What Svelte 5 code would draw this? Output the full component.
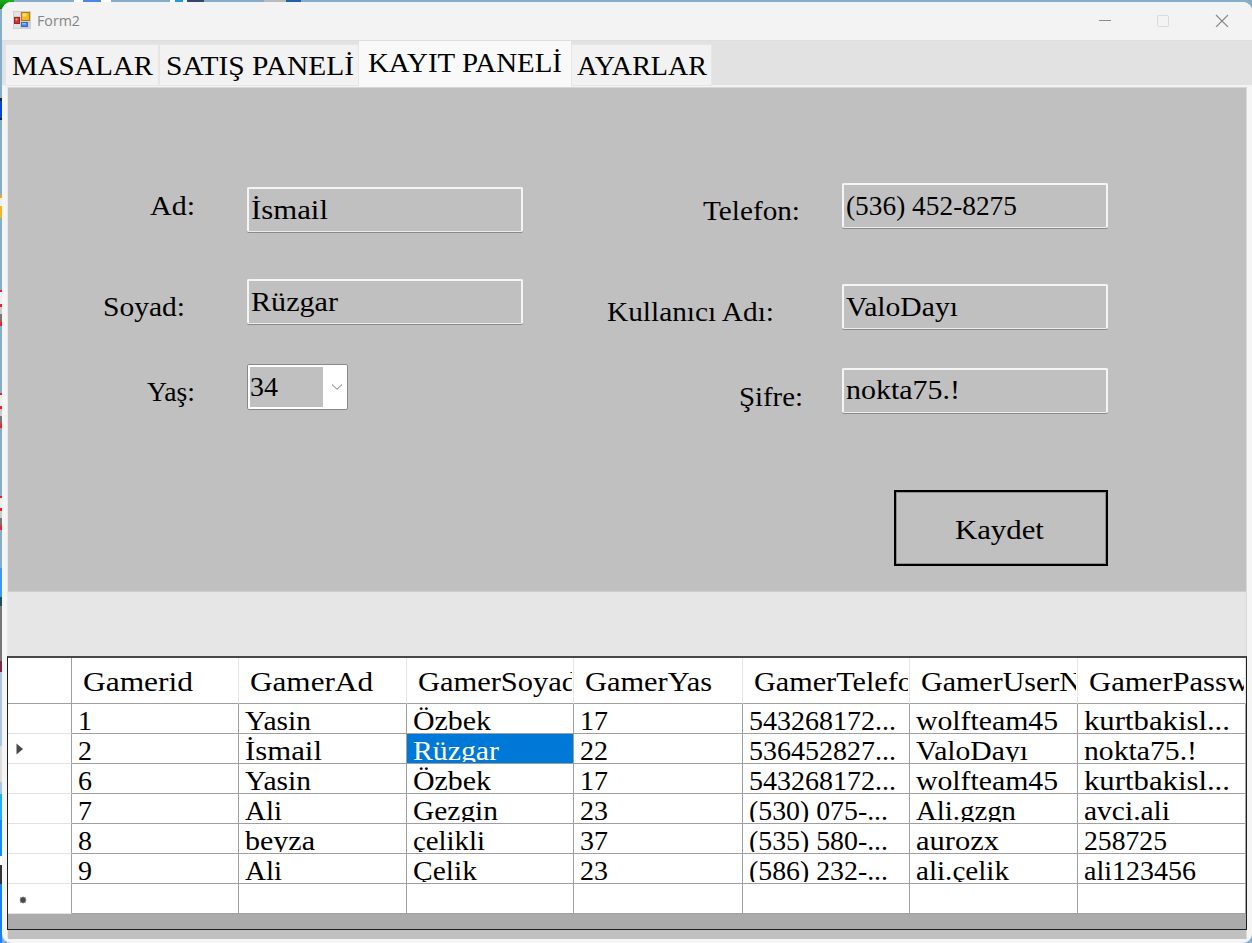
<script>
  // Widens the glyphs of a text so that it fills the given width.
  function fit(node, width) {
    if (!width) return;
    const natural = node.getBoundingClientRect().width;
    node.style.transform = `scaleX(${((width + 1) / natural).toFixed(4)})`;
  }

  const tabs = [
    { text: 'MASALAR', w: 140, cls: 't1' },
    { text: 'SATIŞ PANELİ', w: 187, cls: 't2' },
    { text: 'KAYIT PANELİ', w: 193, cls: 't3 active' },
    { text: 'AYARLAR', w: 129, cls: 't4' }
  ];

  const columns = [
    ['Gamerid', 109],
    ['GamerAd', 122],
    ['GamerSoyad', 158],
    ['GamerYas', 126],
    ['GamerTelefon', 173],
    ['GamerUserName', 209],
    ['GamerPassword', 200]
  ];

  const rows = [
    [['1'], ['Yasin', 65], ['Özbek', 77], ['17', 27], ['543268172...', 146], ['wolfteam45', 141], ['kurtbakisl...', 145]],
    [['2'], ['İsmail', 76], ['Rüzgar', 85], ['22', 27], ['536452827...', 146], ['ValoDayı', 111], ['nokta75.!', 112]],
    [['6'], ['Yasin', 65], ['Özbek', 77], ['17', 27], ['543268172...', 146], ['wolfteam45', 141], ['kurtbakisl...', 145]],
    [['7'], ['Ali', 36], ['Gezgin', 84], ['23', 27], ['(530) 075-...', 138], ['Ali.gzgn', 99], ['avci.ali', 85]],
    [['8'], ['beyza', 69], ['çelikli', 71], ['37', 27], ['(535) 580-...', 138], ['aurozx', 82], ['258725', 82]],
    [['9'], ['Ali', 36], ['Çelik', 63], ['23', 27], ['(586) 232-...', 138], ['ali.çelik', 92], ['ali123456', 111]],
    [[''], [''], [''], [''], [''], [''], ['']]
  ];
</script>

<div class="desktop">
  <div class="window">
    <header class="titlebar">
      <svg class="app-icon" width="18" height="18" viewBox="0 0 18 18">
        <rect width="18" height="18" fill="#cfcfd1" />
        <rect x="1" y="1" width="6" height="4" fill="#e3e3e5" />
        <rect x="1" y="13" width="6" height="4" fill="#e3e3e5" />
        <rect x="8.5" y="1.500" width="8" height="8" fill="#f0b920" stroke="#b07d12" />
        <rect x="9.500" y="2.500" width="4" height="3" fill="#fbdc70" />
        <rect x="1.500" y="6.500" width="5" height="6" fill="#c93528" stroke="#a3251c" />
        <rect x="2.500" y="7.500" width="2" height="2" fill="#ee9a8d" />
        <rect x="8.500" y="11.500" width="6" height="4" fill="#4585e8" stroke="#3a6ac0" />
        <rect x="9" y="12" width="4" height="1.500" fill="#8db9f7" />
      </svg>
      <span class="title"><span use:fit={42}>Form2</span></span>
      <svg class="controls" width="132" height="14" viewBox="0 0 132 14" fill="none">
        <path d="M1 7.500H13" stroke="#8c8c8c" />
        <rect x="59.500" y="2.500" width="11" height="11" rx="1" stroke="#dadada" />
        <path d="M118 2L130 14M130 2L118 14" stroke="#888" stroke-width="1.100" />
      </svg>
    </header>

    <nav class="tabs">
      {#each tabs as tab}
        <div class="tab {tab.cls}"><span use:fit={tab.w}>{tab.text}</span></div>
      {/each}
    </nav>

    <main class="page">
      <section class="form">
        <div class="col left">
          <div class="row r1"><label for="ad"><span use:fit={44}>Ad:</span></label><div class="box" id="ad"><span use:fit={76}>İsmail</span></div></div>
          <div class="row r2"><label for="soyad"><span use:fit={81}>Soyad:</span></label><div class="box" id="soyad"><span use:fit={86}>Rüzgar</span></div></div>
          <div class="row r3">
            <label for="yas"><span use:fit={47}>Yaş:</span></label>
            <div class="combo" id="yas">
              <div class="value"><span use:fit={27}>34</span></div>
              <svg width="12" height="8" viewBox="0 0 12 8"><path d="M1 1.500L6 6.300L11 1.500" fill="none" stroke="#777" /></svg>
            </div>
          </div>
        </div>
        <div class="col right">
          <div class="row r4"><label for="tel"><span use:fit={96}>Telefon:</span></label><div class="box" id="tel"><span use:fit={170}>(536) 452-8275</span></div></div>
          <div class="row r5"><label for="user"><span use:fit={166}>Kullanıcı Adı:</span></label><div class="box" id="user"><span use:fit={111}>ValoDayı</span></div></div>
          <div class="row r6"><label for="pass"><span use:fit={63}>Şifre:</span></label><div class="box" id="pass"><span use:fit={113}>nokta75.!</span></div></div>
          <button><span use:fit={88}>Kaydet</span></button>
        </div>
      </section>

      <div class="band"></div>

      <section class="grid">
        <div class="line head">
          <div class="rowhead"></div>
          {#each columns as [text, w]}
            <div class="cell"><div class="clip"><span use:fit={w}>{text}</span></div></div>
          {/each}
        </div>
        {#each rows as row, i}
          <div class="line">
            <div class="rowhead">
              {#if i === 1}
                <svg width="8" height="12" viewBox="0 0 8 12"><path d="M.5 .5L7 6L.5 11.500Z" fill="#484848" /></svg>
              {:else if i === 6}
                <svg class="star" width="8" height="8" viewBox="0 0 8 8"><path d="M4 .8V7.200M.8 4H7.200M1.500 1.500L6.500 6.500M6.500 1.500L1.500 6.500" stroke="#484848" stroke-width="1.600" /></svg>
              {/if}
            </div>
            {#each row as [text, w], j}
              <div class="cell" class:selected={i === 1 && j === 2}><div class="clip"><span use:fit={w}>{text}</span></div></div>
            {/each}
          </div>
        {/each}
      </section>
    </main>
  </div>
</div>

<style>
  :global(body) {
    margin: 0;
    overflow: hidden;
  }
  .desktop {
    box-sizing: border-box;
    width: 1252px;
    height: 943px;
    padding: 2px 0 0 2px;
    background:
      linear-gradient(#19b319, #0a7a0a) 0 0 / 14px 9px no-repeat,
      linear-gradient(90deg, transparent 74px, #fff 74px 83px, #4b86ee 83px 101px, #fff 101px 111px, transparent 111px 170px, #fff 170px 175px, #1b9be5 175px 183px, #fff 183px 187px, #35456d 187px 204px, transparent 204px 264px, #bbb 264px 286px, #225eac 286px 301px, transparent 301px) 0 0 / 1252px 2px no-repeat,
      linear-gradient(transparent 98px, #222 98px 101px, #0846d5 101px 118px, #222 118px 120px, transparent 120px 195px, #f0a820 195px 198px, #eee 198px 206px, #f4b52c 206px 218px, transparent 218px 290px, #e22 290px 292px, #eee 292px 304px, #e22 304px 307px, #ccc 307px 314px, #777 314px 319px, #e22 324px 326px, transparent 326px 393px, #e22 393px 395px, #eee 395px 406px, #e22 406px 409px, #ccc 409px 416px, #777 416px 421px, #e22 426px 428px, transparent 428px 496px, #e22 496px 498px, #eee 498px 508px, #e22 508px 511px, #ccc 511px 518px, #777 518px 523px, #e22 528px 530px, transparent 530px 568px, #3f97f5 568px 597px, #244f55 597px 606px, #777 606px 661px, #7b2942 661px 672px, #a8c6df 672px 746px, #ddd 746px 782px, #a8c6df 782px 794px, #24aef6 794px 820px, #1689f5 820px 856px, #fff 856px 865px, #333 865px 884px, #1880f5 884px) 0 0 / 2px 943px no-repeat,
      linear-gradient(#86aecb, #86aecb);
    color: #000;
    font: 28px/32px "Liberation Serif", serif;
  }
  span {
    display: inline-block;
    white-space: pre;
    transform-origin: 0 50%;
  }
  .window {
    box-sizing: border-box;
    width: 1250px;
    height: 941px;
    overflow: hidden;
    border-radius: 9px;
    background: #f5f5f5;
  }
  .titlebar {
    display: flex;
    align-items: center;
    height: 38px;
    background: #f3f3f3;
  }
  .app-icon {
    margin: 0 0 2px 11px;
  }
  .title {
    flex: 1;
    margin: 0 0 2px 6px;
    color: #858585;
    font: 15px/20px "Open Sans", sans-serif;
  }
  .controls {
    margin: 0 22px 3px 0;
  }
  .tabs {
    box-sizing: border-box;
    display: flex;
    align-items: flex-start;
    height: 47px;
    padding: 3px 0 0 3px;
    background: linear-gradient(#e2e2e2 44px, #f3f3f3 44px);
    border-top: 1px solid #dedede;
    line-height: 32px;
  }
  .tab {
    box-sizing: border-box;
    height: 42px;
    padding-top: 5px;
    border: 1px solid #e6e6e6;
    background: #f2f2f2;
  }
  .t1 { width: 154px; padding-left: 6px; }
  .t2 { width: 200px; padding-left: 6px; }
  .t4 { width: 141px; padding-left: 5px; }
  .active {
    width: 212px;
    height: 46px;
    margin-top: -3px;
    padding-left: 8px;
    background: #f9f9f9;
    border-color: #f9f9f9;
  }
  .page {
    box-sizing: border-box;
    width: 1240px;
    height: 852px;
    margin-left: 5px;
    border-top: 1px solid #d6d6d6;
    border-left: 1px solid #e9e9e9;
    border-right: 1px solid #d9d9d9;
    background: #c0c0c0;
  }
  .form {
    display: flex;
    height: 503px;
  }
  .col {
    display: flex;
    flex-direction: column;
  }
  .left { width: 515px; }
  .right { width: 585px; }
  .row {
    display: flex;
    height: 46px;
  }
  .left label { width: 239px; }
  .right label { width: 319px; }
  label {
    box-sizing: border-box;
    flex: none;
  }
  .r1 { margin-top: 99px; }
  .r2 { margin-top: 46px; }
  .r3 { margin-top: 39px; }
  .r4 { margin-top: 95px; }
  .r5 { margin-top: 55px; }
  .r6 { margin-top: 38px; }
  .r1 label { padding: 3px 0 0 142px; }
  .r2 label { padding: 12px 0 0 95px; }
  .r3 label { padding: 12px 0 0 139px; }
  .r4 label { padding: 12px 0 0 180px; }
  .r5 label { padding: 12px 0 0 84px; }
  .r6 label { padding: 13px 0 0 216px; }
  .box {
    box-sizing: border-box;
    flex: 1;
    height: 45px;
    padding: 5px 0 0 2px;
    border: 2px solid #f5f5f5;
    border-bottom: 1px solid #ececec;
    border-radius: 2px;
    box-shadow: 0 1px 0 #8a8a8a;
  }
  .r6 .box { padding-top: 4px; }
  .combo {
    box-sizing: border-box;
    display: flex;
    align-items: center;
    width: 101px;
    height: 46px;
    padding: 2px;
    border: 1px solid #8a8a8a;
    border-radius: 2px;
    background: #fff;
  }
  .value {
    width: 73px;
    height: 39px;
    padding-top: 1px;
    background: #c0c0c0;
  }
  .value span { margin-top: 3px; }
  .combo svg { margin-left: 8px; }
  button {
    box-sizing: border-box;
    align-self: flex-end;
    width: 214px;
    height: 76px;
    margin-top: 76px;
    padding: 3px 4px 0 0;
    border: 2px solid #000;
    outline: 1px solid #8e8e8e;
    outline-offset: -3px;
    background: #c0c0c0;
    color: #000;
    font: inherit;
  }
  button span { transform-origin: 50% 50%; }
  .band {
    height: 65px;
    border-top: 1px solid #cecece;
    background: #e6e6e6;
    box-sizing: border-box;
  }
  .grid {
    box-sizing: border-box;
    width: 1240px;
    height: 274px;
    margin-left: -1px;
    overflow: hidden;
    border: 1px solid #1f1f1f;
    border-top: 2px solid #484848;
    background: #ababab;
  }
  .line {
    display: grid;
    grid-template-columns: 64px 167px 168px 167px 169px 167px 168px 168px;
    height: 30px;
    background: #fff;
  }
  .head { height: 46px; }
  .rowhead {
    box-sizing: border-box;
    display: flex;
    align-items: center;
    padding: 0 0 0 8px;
    border-right: 1px solid #a0a0a0;
    border-bottom: 1px solid #e2e2e2;
  }
  .head .rowhead { border-bottom-color: #a0a0a0; }
  .star { margin: 2px 0 0 3px; }
  .cell {
    box-sizing: border-box;
    min-width: 0;
    padding-left: 6px;
    border-right: 1px solid #a0a0a0;
    border-bottom: 1px solid #a0a0a0;
  }
  .head .cell {
    padding: 0 1px 0 11px;
    border-right-color: #e5e5e5;
  }
  .clip {
    height: 28px;
    overflow: hidden;
    line-height: 34px;
  }
  .head .clip {
    height: 44px;
    padding-top: 6px;
    line-height: 36px;
    box-sizing: border-box;
  }
  .selected {
    background: #0078d7;
    color: #fff;
  }
</style>
